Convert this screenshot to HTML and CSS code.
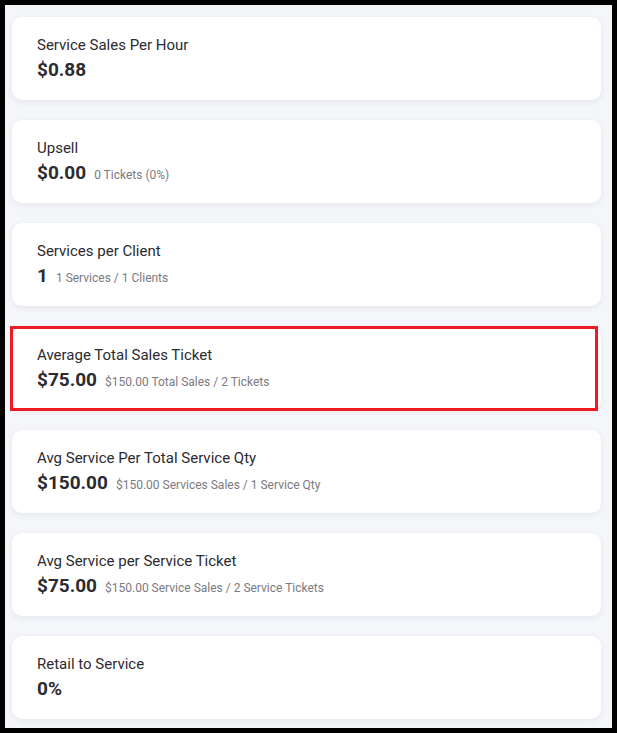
FILE: index.html
```html
<!DOCTYPE html>
<html lang="en">
<head>
    <meta charset="UTF-8">
    <meta name="viewport" content="width=device-width, initial-scale=1.0">
    <title>Service Metrics</title>
    <link rel="stylesheet" href="styles.css">
</head>
<body>
    <div class="frame">
        <div class="metric-list">
            <div class="metric-card">
                <div class="metric-title">Service Sales Per Hour</div>
                <div class="metric-row">
                    <span class="metric-value">$0.88</span>
                </div>
            </div>
            <div class="metric-card">
                <div class="metric-title">Upsell</div>
                <div class="metric-row">
                    <span class="metric-value">$0.00</span>
                    <span class="metric-note">0 Tickets (0%)</span>
                </div>
            </div>
            <div class="metric-card">
                <div class="metric-title">Services per Client</div>
                <div class="metric-row">
                    <span class="metric-value">1</span>
                    <span class="metric-note">1 Services / 1 Clients</span>
                </div>
            </div>
            <div class="metric-card highlight">
                <div class="metric-title">Average Total Sales Ticket</div>
                <div class="metric-row">
                    <span class="metric-value">$75.00</span>
                    <span class="metric-note">$150.00 Total Sales / 2 Tickets</span>
                </div>
            </div>
            <div class="metric-card">
                <div class="metric-title">Avg Service Per Total Service Qty</div>
                <div class="metric-row">
                    <span class="metric-value">$150.00</span>
                    <span class="metric-note">$150.00 Services Sales / 1 Service Qty</span>
                </div>
            </div>
            <div class="metric-card">
                <div class="metric-title">Avg Service per Service Ticket</div>
                <div class="metric-row">
                    <span class="metric-value">$75.00</span>
                    <span class="metric-note">$150.00 Service Sales / 2 Service Tickets</span>
                </div>
            </div>
            <div class="metric-card">
                <div class="metric-title">Retail to Service</div>
                <div class="metric-row">
                    <span class="metric-value">0%</span>
                </div>
            </div>
        </div>
    </div>
</body>
</html>
```

FILE: styles.css
```css
/* General Styling */
html, body {
    margin: 0;
    padding: 0;
    background: #000;
    font-family: Roboto, 'Liberation Sans', sans-serif;
}

.frame {
    margin: 5px;
    height: 723px;
    background: #f5f6fa;
    overflow: hidden;
}

/* Card list */
.metric-list {
    display: flex;
    flex-direction: column;
    gap: 20.2px;
    padding: 12px 11px 0 7px;
}

.metric-card {
    position: relative;
    height: 83px;
    box-sizing: border-box;
    padding: 18px 25px 0;
    background: #fff;
    border-radius: 10px;
    box-shadow: 0 2px 6px rgba(40, 50, 90, 0.08);
}

/* Red annotation box */
.metric-card.highlight::after {
    content: "";
    position: absolute;
    top: -1px;
    left: -2px;
    right: 3px;
    bottom: -1px;
    border: 3px solid #ed1c24;
}

.metric-title {
    font-size: 15px;
    line-height: 20px;
    color: #2b2b30;
}

.metric-row {
    display: flex;
    align-items: baseline;
    gap: 8px;
    margin-top: 3px;
}

.metric-value {
    font-size: 19px;
    line-height: 24px;
    font-weight: 700;
    color: #2b2b30;
}

.metric-note {
    font-size: 12px;
    color: #7a7a80;
}
```
